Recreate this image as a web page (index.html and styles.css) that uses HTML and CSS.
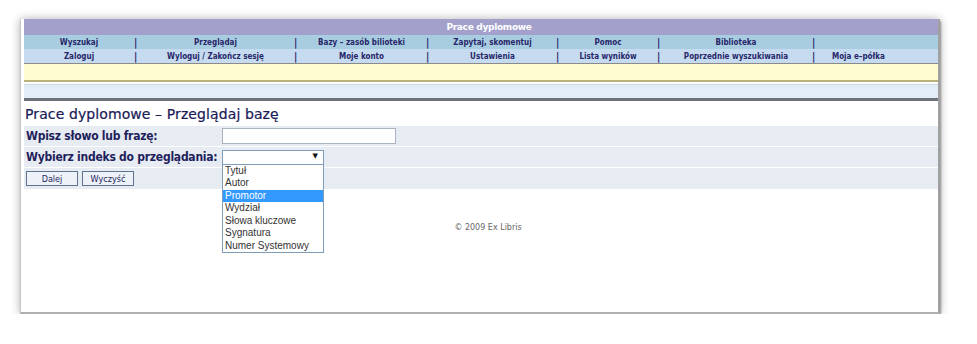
FILE: index.html
```html
<!DOCTYPE html>
<html lang="pl">
  <head>
    <meta charset="UTF-8" />
    <title>Prace dyplomowe - Przeglądaj bazę</title>
    <link rel="stylesheet" href="styles.css">
  </head>
  <body>
    <div class="shot">
      <div class="frame">
        <div class="title-bar">Prace dyplomowe</div>
        <div class="nav-row nav-top">
          <span class="cell">Wyszukaj</span><span class="sep">|</span>
          <span class="cell">Przeglądaj</span><span class="sep">|</span>
          <span class="cell">Bazy – zasób bilioteki</span><span class="sep">|</span>
          <span class="cell">Zapytaj, skomentuj</span><span class="sep">|</span>
          <span class="cell">Pomoc</span><span class="sep">|</span>
          <span class="cell">Biblioteka</span><span class="sep">|</span>
          <span class="cell"></span>
        </div>
        <div class="nav-row nav-bottom">
          <span class="cell">Zaloguj</span><span class="sep">|</span>
          <span class="cell">Wyloguj / Zakończ sesję</span><span class="sep">|</span>
          <span class="cell">Moje konto</span><span class="sep">|</span>
          <span class="cell">Ustawienia</span><span class="sep">|</span>
          <span class="cell">Lista wyników</span><span class="sep">|</span>
          <span class="cell">Poprzednie wyszukiwania</span><span class="sep">|</span>
          <span class="cell last">Moja e–półka</span>
        </div>
        <div class="msg-bar"></div>
        <div class="info-bar"></div>

        <h1 class="page-title">Prace dyplomowe – Przeglądaj bazę</h1>

        <div class="form-row">
          <label class="label">Wpisz słowo lub frazę:</label>
          <input class="text-input" type="text">
        </div>
        <div class="form-row">
          <label class="label">Wybierz indeks do przeglądania:</label>
          <div class="select-wrap">
            <div class="select-box"><span class="arrow">▼</span></div>
            <ul class="select-list">
              <li>Tytuł</li>
              <li>Autor</li>
              <li class="active">Promotor</li>
              <li>Wydział</li>
              <li>Słowa kluczowe</li>
              <li>Sygnatura</li>
              <li>Numer Systemowy</li>
            </ul>
          </div>
        </div>
        <div class="form-row buttons">
          <button class="btn">Dalej</button>
          <button class="btn">Wyczyść</button>
        </div>

        <div class="footer">© 2009 Ex Libris</div>
      </div>
    </div>
  </body>
</html>
```

FILE: styles.css
```css
* {
  margin: 0;
  padding: 0;
  box-sizing: border-box;
}
body {
  background: #fff;
  font-family: "DejaVu Sans", Verdana, sans-serif;
}
.shot {
  padding: 19px 0 0 20px;
}
.frame {
  width: 920px;
  height: 295px;
  background: #fff;
  padding-left: 3px;
  box-shadow: 1px 2px 2px rgba(0, 0, 0, 0.35), 0 0 9px rgba(0, 0, 0, 0.3);
  border-left: 1px solid #c8c8c8;
  border-right: 2px solid #a0a0a0;
  border-bottom: 2px solid #b0b0b0;
}
.title-bar {
  height: 16px;
  background: #a3a0cb;
  color: #fff;
  font-weight: bold;
  font-size: 9px;
  line-height: 16px;
  text-align: center;
  padding-left: 16px;
  letter-spacing: -0.3px;
}
.nav-row {
  display: grid;
  grid-template-columns: 110px 3px 157px 3px 129px 3px 127px 3px 98px 3px 152px 3px 1fr;
  height: 14px;
  align-items: center;
  font-family: "DejaVu Sans Condensed", "DejaVu Sans", sans-serif;
  font-weight: bold;
  font-size: 8px;
  color: #27276a;
}
.nav-top {
  background: #a9cde0;
}
.nav-bottom {
  height: 15px;
  background: #c6dbef;
  border-bottom: 1px solid #8b8b8b;
}
.cell {
  text-align: center;
  white-space: nowrap;
}
.cell.last {
  text-align: left;
  padding-left: 17px;
}
.sep {
  font-size: 10px;
  text-align: center;
}
.msg-bar {
  height: 18px;
  background: #fffccf;
  border-bottom: 2px solid #b9b27a;
}
.info-bar {
  height: 17px;
  margin-top: 2px;
  background: #e3edf8;
  border-top: 1px solid #cfd7e0;
  border-bottom: 3px solid #6f7379;
}
.page-title {
  font-size: 14px;
  font-weight: normal;
  color: #1a1a58;
  padding: 5px 0 0 1px;
  height: 25px;
  letter-spacing: 0.1px;
  -webkit-text-stroke: 0.2px #1a1a58;
}
.form-row {
  display: flex;
  align-items: center;
  height: 20px;
  margin-bottom: 1px;
  background: #e7ebf2;
  padding-left: 2px;
}
.label {
  width: 196px;
  flex-shrink: 0;
  white-space: nowrap;
  font-family: "DejaVu Sans Condensed", "DejaVu Sans", sans-serif;
  font-size: 12px;
  font-weight: bold;
  letter-spacing: -0.25px;
  color: #1f1f5c;
}
.text-input {
  width: 174px;
  height: 16px;
  border: 1px solid #a9b3c0;
  background: #fff;
}
.select-wrap {
  position: relative;
}
.select-box {
  width: 102px;
  height: 15px;
  border: 1px solid #7f9db9;
  background: #fff;
  position: relative;
}
.arrow {
  position: absolute;
  right: 5px;
  top: 1px;
  font-size: 7px;
  color: #111;
}
.select-list {
  position: absolute;
  left: 0;
  top: 14px;
  width: 102px;
  list-style: none;
  background: #fff;
  border: 1px solid #7f9db9;
  font-family: "Liberation Sans", Arial, sans-serif;
  font-size: 10px;
  color: #333;
  z-index: 5;
}
.select-list li {
  height: 12.5px;
  line-height: 12.5px;
  padding-left: 2px;
}
.select-list li.active {
  background: #3399ff;
  color: #fff;
}
.buttons {
  gap: 4px;
  height: 21px;
}
.btn {
  width: 52px;
  height: 15px;
  background: #edf1f8;
  border: 1px solid #5f7390;
  font-family: "DejaVu Sans Condensed", "DejaVu Sans", sans-serif;
  font-size: 9px;
  color: #1f1f5c;
}
.footer {
  margin-top: 34px;
  text-align: center;
  font-size: 8px;
  color: #666;
  padding-left: 14px;
}
```
